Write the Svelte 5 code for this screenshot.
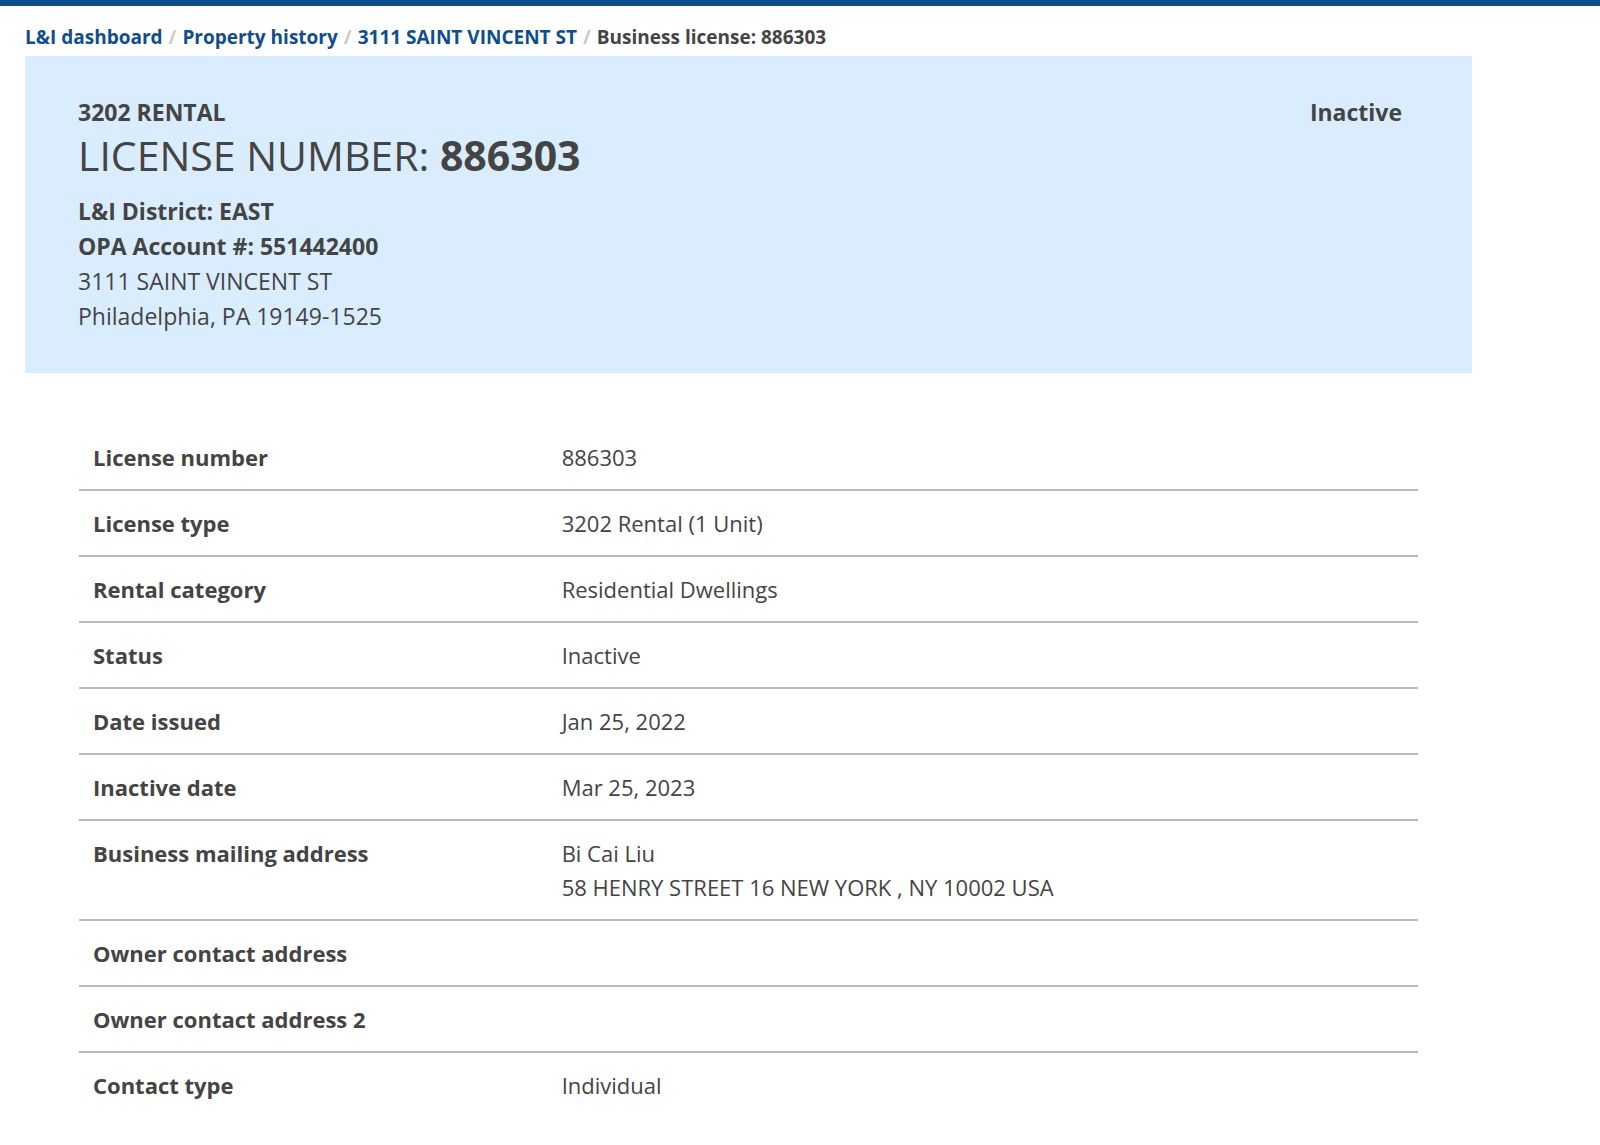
<script lang="ts">
  interface Crumb {
    label: string;
    href?: string;
  }

  interface Row {
    label: string;
    lines: string[];
  }

  const crumbs: Crumb[] = [
    { label: 'L&I dashboard', href: '#dashboard' },
    { label: 'Property history', href: '#property-history' },
    { label: '3111 SAINT VINCENT ST', href: '#property' },
    { label: 'Business license: 886303' }
  ];

  const rows: Row[] = [
    { label: 'License number', lines: ['886303'] },
    { label: 'License type', lines: ['3202 Rental (1 Unit)'] },
    { label: 'Rental category', lines: ['Residential Dwellings'] },
    { label: 'Status', lines: ['Inactive'] },
    { label: 'Date issued', lines: ['Jan 25, 2022'] },
    { label: 'Inactive date', lines: ['Mar 25, 2023'] },
    {
      label: 'Business mailing address',
      lines: ['Bi Cai Liu', '58 HENRY STREET 16 NEW YORK , NY 10002 USA']
    },
    { label: 'Owner contact address', lines: [] },
    { label: 'Owner contact address 2', lines: [] },
    { label: 'Contact type', lines: ['Individual'] }
  ];
</script>

<div class="page">
  <nav aria-label="Breadcrumb">
    <ol class="breadcrumbs">
      {#each crumbs as crumb}
        <li>
          {#if crumb.href}
            <a href={crumb.href}>{crumb.label}</a>
          {:else}
            <span aria-current="page">{crumb.label}</span>
          {/if}
        </li>
      {/each}
    </ol>
  </nav>

  <main>
    <header class="summary">
      <div>
        <p class="strong">3202 RENTAL</p>
        <h1>LICENSE NUMBER: <b>886303</b></h1>
        <p class="strong">L&amp;I District: EAST</p>
        <p class="strong">OPA Account #: 551442400</p>
        <address>
          3111 SAINT VINCENT ST<br />
          Philadelphia, PA 19149-1525
        </address>
      </div>
      <p class="strong">Inactive</p>
    </header>

    <div class="details">
      <table>
        <tbody>
          {#each rows as row}
            <tr>
              <th scope="row">{row.label}</th>
              <td>
                {#each row.lines as line}
                  <div>{line}</div>
                {/each}
              </td>
            </tr>
          {/each}
        </tbody>
      </table>
    </div>
  </main>
</div>

<style>
  :global(body) {
    background: #fff;
  }
  .page {
    padding: 0 25px;
    border-top: 6px solid #0f4d90;
    color: #444;
    font-family: 'Open Sans', 'Noto Sans', sans-serif;
    font-size: 22px;
    line-height: 34px;
  }
  .breadcrumbs {
    display: flex;
    flex-wrap: wrap;
    margin: 0;
    padding: 17px 0 5px;
    list-style: none;
    font-size: 19px;
    font-weight: 700;
    line-height: 28px;
  }
  .breadcrumbs li + li::before {
    content: '/';
    margin: 0 6px;
    color: #cacaca;
  }
  .breadcrumbs a {
    color: #0f4d90;
    text-decoration: none;
  }
  .breadcrumbs a:hover {
    text-decoration: underline;
  }
  main {
    max-width: 1447px;
  }
  .summary {
    display: flex;
    justify-content: space-between;
    padding: 39px 70px 39px 53px;
    background: #daedfe;
    font-size: 23px;
    line-height: 35px;
  }
  .summary p {
    margin: 0;
  }
  .summary .strong {
    font-weight: 700;
  }
  h1 {
    margin: 0 0 14px;
    font-size: 41px;
    font-weight: 400;
    line-height: 50px;
  }
  h1 b {
    font-weight: 700;
  }
  address {
    font-style: normal;
  }
  .details {
    padding: 52px 54px;
  }
  table {
    width: 100%;
    border-collapse: separate;
    border-spacing: 0;
    table-layout: fixed;
  }
  th,
  td {
    padding: 15px 14px;
    border-bottom: 2px solid #bababa;
    text-align: left;
    vertical-align: top;
  }
  th {
    width: 35%;
    box-sizing: border-box;
    font-weight: 700;
  }
  tr:last-child th,
  tr:last-child td {
    border-bottom: 0;
  }
</style>
